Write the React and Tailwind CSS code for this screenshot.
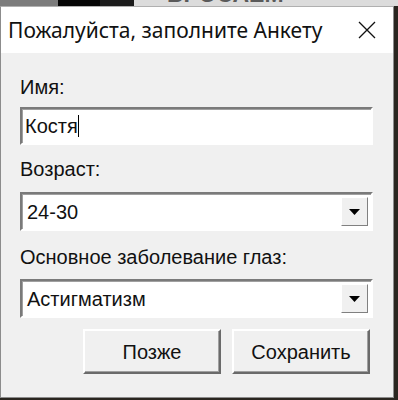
import { useState } from 'react';

const sunken =
  'border-2 border-t-[#7a7a7a] border-l-[#7a7a7a] border-b-white border-r-white shadow-[inset_1px_1px_0_#a0a0a0]';

function Combo({ value }) {
  return (
    <div className={`flex items-center h-[39px] bg-white ${sunken}`}>
      <span className="flex-1 pl-[5px] text-[20px] leading-[24px] text-[#111]">{value}</span>
      <div className="w-[27px] h-[29px] mr-[3px] bg-[#f0f0f0] border border-t-white border-l-white border-b-[#808080] border-r-[#808080] flex items-center justify-center">
        <svg width="11" height="6" viewBox="0 0 11 6">
          <path d="M0 0h11L5.5 6z" fill="#000" />
        </svg>
      </div>
    </div>
  );
}

function Button({ children }) {
  return (
    <button className="w-[138px] h-[45px] bg-[#f0f0f0] text-[20px] text-[#111] border-2 border-t-white border-l-white border-b-[#6a6a6a] border-r-[#6a6a6a] shadow-[inset_-1px_-1px_0_#a0a0a0]">
      {children}
    </button>
  );
}

export default function App() {
  const [name] = useState('Костя');

  return (
    <div className="w-[398px] h-[400px] bg-[#2a2620] overflow-hidden flex flex-col">
      {/* backdrop strip */}
      <div className="flex h-[6px] shrink-0">
        <div className="w-[58px] bg-[#7c7c7c]" />
        <div className="w-[42px] bg-[#050505]" />
        <div className="w-[34px] bg-[#1c1c1c]" />
        <div className="flex-1 bg-[#dcdcdc] overflow-hidden relative">
          <span className="absolute left-[33px] -top-[19px] text-[23px] leading-[26px] font-bold text-[#5a5a5a] font-['Liberation_Sans',sans-serif]">
            БРОСАЕМ
          </span>
        </div>
      </div>

      <div className="flex flex-1">
        {/* dialog window */}
        <div className="w-[394px] h-[392px] flex flex-col border border-[#8c8c8c] border-t-[#b0b0b0] font-['Liberation_Sans',sans-serif]">
          <div className="h-[46px] bg-white flex items-center justify-between pl-[7px] pr-[17px]">
            <span className="text-[21px] leading-[26px] text-[#111] font-['Noto_Sans',sans-serif]">
              Пожалуйста, заполните Анкету
            </span>
            <svg width="18" height="18" viewBox="0 0 18 18" stroke="#111" strokeWidth="1.3">
              <path d="M1 1l16 16M17 1L1 17" />
            </svg>
          </div>

          <div className="flex-1 bg-[#f0f0f0] pl-[19px] pr-[20px] pt-[22px] flex flex-col">
            <label className="text-[20px] leading-[24px] text-[#111]">Имя:</label>
            <div className={`mt-[8px] h-[38px] bg-white flex items-center ${sunken}`}>
              <span className="pl-[3px] text-[20px] leading-[24px] text-[#111]">{name}</span>
              <span className="w-px h-[22px] bg-black" />
            </div>

            <label className="mt-[12px] text-[20px] leading-[24px] text-[#111]">Возраст:</label>
            <div className="mt-[11px]">
              <Combo value="24-30" />
            </div>

            <label className="mt-[14px] text-[20px] leading-[24px] text-[#111]">Основное заболевание глаз:</label>
            <div className="mt-[10px]">
              <Combo value="Астигматизм" />
            </div>

            <div className="mt-[11px] flex justify-end gap-[11px] pr-[3px]">
              <Button>Позже</Button>
              <Button>Сохранить</Button>
            </div>
          </div>
        </div>
      </div>
    </div>
  );
}
